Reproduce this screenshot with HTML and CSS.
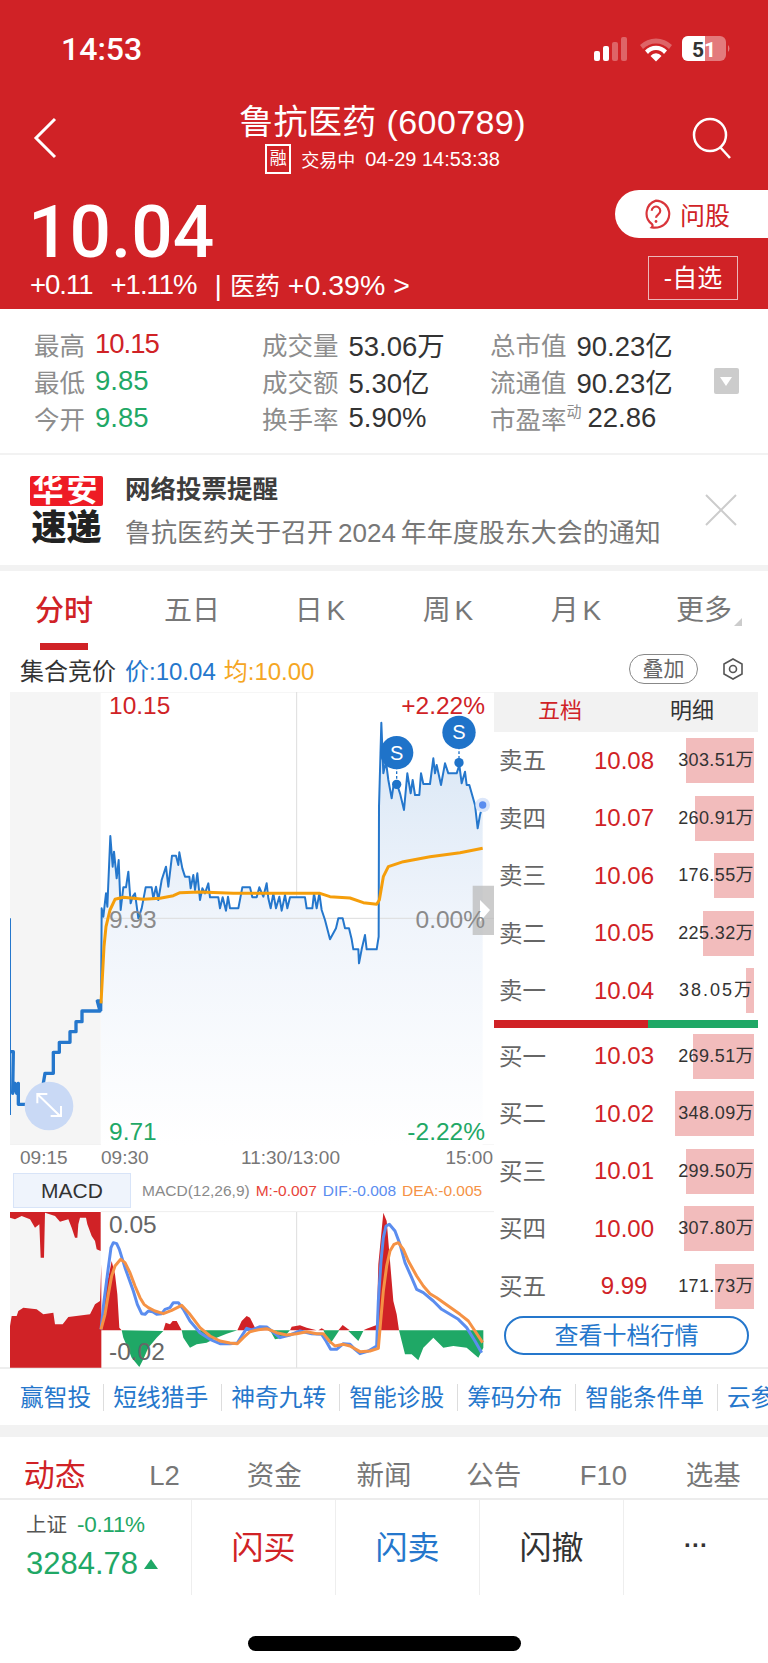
FILE: index.html
```html
<!DOCTYPE html>
<html>
  <head>
    <meta charset="utf-8">
    <title>鲁抗医药 (600789)</title>
    <link rel="stylesheet" href="styles.css">
  </head>
  <body>
    <div class="page">

      <!-- red quote header -->
      <header class="head">
        <div class="status">
          <span class="clock">14:53</span>
          <svg class="status-icons" width="140" height="28" viewBox="0 0 140 28">
            <rect x="1" y="16" width="6" height="10" rx="2" fill="#fff"/>
            <rect x="10" y="11" width="6" height="15" rx="2" fill="#fff"/>
            <rect x="19" y="7" width="6" height="19" rx="2" fill="#fff" opacity=".3"/>
            <rect x="28" y="2" width="6" height="24" rx="2" fill="#fff" opacity=".3"/>
            <path d="M47 10a23 23 0 0 1 32 0l-3 4a18 18 0 0 0-26 0z" fill="#fff" opacity=".3"/>
            <path d="M52 15.500a15 15 0 0 1 22 0l-3 3.500a10 10 0 0 0-16 0z" fill="#fff"/>
            <path d="M57.500 21a7 7 0 0 1 11 0l-5.500 5.500z" fill="#fff"/>
            <rect x="89" y="1" width="44" height="25" rx="6" fill="#fff" opacity=".4"/>
            <path d="M95 1h17v25h-17a6 6 0 0 1-6-6v-13a6 6 0 0 1 6-6z" fill="#fff"/>
            <path d="M135 10a5 5 0 0 1 0 7z" fill="#fff" opacity=".4"/>
            <text x="111" y="22" class="batt-text" text-anchor="end" fill="#333">5</text>
            <text x="111" y="22" class="batt-text" fill="#fff">1</text>
          </svg>
        </div>

        <div class="nav">
          <svg class="nav-icon" width="24" height="42" viewBox="0 0 24 42">
            <path d="M22 2 3 21l19 19" fill="none" stroke="#fff" stroke-width="3"/>
          </svg>
          <div class="nav-title">
            <div class="stock-name">鲁抗医药 (600789)</div>
            <div class="stock-state"><span class="rong">融</span>交易中<span class="stock-time">04-29 14:53:38</span></div>
          </div>
          <svg class="nav-icon nav-search" width="40" height="42" viewBox="0 0 40 42">
            <circle cx="18" cy="18" r="16" fill="none" stroke="#fff" stroke-width="2.500"/>
            <path d="M28 30 38 41" fill="none" stroke="#fff" stroke-width="2.500"/>
          </svg>
        </div>

        <div class="quote">
          <div class="quote-left">
            <div class="last-price">10.04</div>
            <div class="quote-sub">
              <span class="narrow">+0.11</span><span class="narrow">+1.11%</span><span class="sector">| <span class="sector-name">医药</span> +0.39% &gt;</span>
            </div>
          </div>
          <div class="quote-right">
            <div class="ask-btn">
              <svg width="30" height="30" viewBox="0 0 28 28">
                <path d="M14 1.500a12.500 12.500 0 0 1 4 24.300c-2 .8-5 1.200-8 .7 1-1 1-2 .3-3A12.500 12.500 0 0 1 14 1.500z" fill="none" stroke="#d9353b" stroke-width="2"/>
                <path d="M10 11a4 4 0 1 1 6 3.500c-1.500 1-2 1.500-2 3" fill="none" stroke="#d9353b" stroke-width="2"/>
                <circle cx="14" cy="21" r="1.300" fill="#d9353b"/>
              </svg>
              问股
            </div>
            <div class="watch-btn">-自选</div>
          </div>
        </div>
      </header>

      <!-- day stats -->
      <section class="stats">
        <div class="stat-grid">
          <div class="stat"><span class="stat-label">最高</span><span class="up narrow">10.15</span></div>
          <div class="stat"><span class="stat-label">成交量</span><span>53.06万</span></div>
          <div class="stat"><span class="stat-label">总市值</span><span>90.23亿</span></div>
          <div class="stat"><span class="stat-label">最低</span><span class="down">9.85</span></div>
          <div class="stat"><span class="stat-label">成交额</span><span>5.30亿</span></div>
          <div class="stat"><span class="stat-label">流通值</span><span>90.23亿</span></div>
          <div class="stat"><span class="stat-label">今开</span><span class="down">9.85</span></div>
          <div class="stat"><span class="stat-label">换手率</span><span>5.90%</span></div>
          <div class="stat stat-pe"><span class="stat-label">市盈率<sup>动</sup></span><span>22.86</span></div>
        </div>
        <div class="stat-more"></div>
      </section>

      <!-- notice -->
      <section class="notice">
        <div class="notice-logo">
          <div class="logo-red">华安</div>
          <div class="logo-black">速递</div>
        </div>
        <div class="notice-text">
          <div class="notice-title">网络投票提醒</div>
          <div class="notice-body">鲁抗医药关于召开<span class="year">2024</span>年年度股东大会的通知</div>
        </div>
        <svg class="notice-close" width="32" height="32" viewBox="0 0 32 32">
          <path d="M1 1 31 31M31 1 1 31" stroke="#ccc" stroke-width="2"/>
        </svg>
      </section>

      <!-- period tabs -->
      <nav class="periods">
        <div class="period active">分时<i></i></div>
        <div class="period">五日</div>
        <div class="period">日 K</div>
        <div class="period">周 K</div>
        <div class="period">月 K</div>
        <div class="period more">更多</div>
      </nav>

      <div class="legend">
        <span class="legend-name">集合竞价</span>
        <span class="legend-price">价:10.04</span>
        <span class="legend-avg">均:10.00</span>
        <span class="overlay-btn">叠加</span>
        <svg class="gear" width="22" height="24" viewBox="0 0 22 24">
          <path d="M11 2 20 7v10l-9 5-9-5V7z" fill="none" stroke="#555" stroke-width="1.600"/>
          <circle cx="11" cy="12" r="3.500" fill="none" stroke="#555" stroke-width="1.600"/>
        </svg>
      </div>

      <section class="market">
        <div class="charts">
          <!-- price chart, coordinates are 3 units per pixel -->
          <div class="price-chart">
            <svg class="plot" width="484" height="453" viewBox="30 6 1452 1359">
              <defs>
                <linearGradient id="area" gradientUnits="userSpaceOnUse" x1="0" y1="100" x2="0" y2="1365">
                  <stop offset="0" stop-color="#d8e6f5"/>
                  <stop offset=".45" stop-color="#eff4fb"/>
                  <stop offset="1" stop-color="#fff"/>
                </linearGradient>
              </defs>
              <rect x="30" y="6" width="272" height="1359" fill="#f5f5f5"/>
              <path d="M302 6H1482M30 1365H1482" stroke="#eee" stroke-width="3"/>
              <path d="M890 6V1365" stroke="#ddd" stroke-width="3"/>
              <polygon fill="url(#area)" points="303,1365 303,960 305,655 310,680 318,610 322,650 331,438 338,530 342,485 350,565 356,510 362,660 370,592 378,592 385,545 392,640 398,620 405,610 415,685 425,655 437,592 455,592 460,625 468,590 475,630 485,570 498,530 505,590 516,497 528,497 535,525 538,487 547,535 555,560 568,560 572,595 580,555 585,600 592,550 600,630 607,595 615,610 625,580 630,622 655,622 660,655 668,622 678,662 684,620 690,655 715,655 727,592 750,592 757,622 770,622 778,592 790,620 800,580 805,625 812,655 820,610 828,655 838,620 845,662 855,615 862,655 870,622 915,622 920,655 937,655 942,610 950,655 958,610 965,660 975,690 990,748 1008,715 1015,685 1028,685 1035,715 1047,715 1055,748 1060,778 1075,778 1077,820 1085,778 1095,735 1100,778 1130,778 1136,740 1137,350 1144,98 1150,250 1158,215 1165,270 1175,325 1180,290 1190,280 1200,310 1212,360 1222,250 1232,310 1238,270 1245,315 1258,315 1263,250 1270,282 1290,282 1300,205 1305,250 1310,225 1323,285 1335,220 1345,250 1370,250 1378,225 1385,280 1395,245 1400,285 1408,285 1425,345 1433,415 1440,375 1448,345 1448,1365"/>
              <path d="M302 685H1482" stroke="#ddd" stroke-width="3"/>
              <path d="M31 685V1275" stroke="#2577cc" stroke-width="4" fill="none"/>
              <polyline class="line-pre" points="32,1085 40,1085 38,1210 45,1180 50,1210 55,1180 55,1243 130,1243 130,1180 135,1150 160,1150 160,1087 178,1087 178,1057 210,1057 210,1025 228,1025 228,995 246,995 246,963 300,963 292,933 302,933 302,963"/>
              <polyline class="line-price" points="303,960 305,655 310,680 318,610 322,650 331,438 338,530 342,485 350,565 356,510 362,660 370,592 378,592 385,545 392,640 398,620 405,610 415,685 425,655 437,592 455,592 460,625 468,590 475,630 485,570 498,530 505,590 516,497 528,497 535,525 538,487 547,535 555,560 568,560 572,595 580,555 585,600 592,550 600,630 607,595 615,610 625,580 630,622 655,622 660,655 668,622 678,662 684,620 690,655 715,655 727,592 750,592 757,622 770,622 778,592 790,620 800,580 805,625 812,655 820,610 828,655 838,620 845,662 855,615 862,655 870,622 915,622 920,655 937,655 942,610 950,655 958,610 965,660 975,690 990,748 1008,715 1015,685 1028,685 1035,715 1047,715 1055,748 1060,778 1075,778 1077,820 1085,778 1095,735 1100,778 1130,778 1136,740 1137,350 1144,98 1150,250 1158,215 1165,270 1175,325 1180,290 1190,280 1200,310 1212,360 1222,250 1232,310 1238,270 1245,315 1258,315 1263,250 1270,282 1290,282 1300,205 1305,250 1310,225 1323,285 1335,220 1345,250 1370,250 1378,225 1385,280 1395,245 1400,285 1408,285 1425,345 1433,415 1440,375 1448,345"/>
              <polyline class="line-avg" points="303,940 312,770 318,710 330,660 345,628 370,622 430,628 480,625 520,617 540,608 600,606 700,610 960,610 990,620 1050,624 1090,638 1130,643 1138,630 1150,560 1165,530 1210,515 1290,500 1380,488 1448,475"/>
              <path d="M1190 230V283M1377 170V218" stroke="#1f73c9" stroke-width="4" stroke-dasharray="8 6"/>
              <circle cx="1190" cy="283" r="14" fill="#1f73c9"/>
              <circle cx="1377" cy="218" r="14" fill="#1f73c9"/>
              <circle cx="1190" cy="188" r="50" fill="#1f73c9"/>
              <circle cx="1377" cy="127" r="50" fill="#1f73c9"/>
              <text x="1190" y="209" class="sell-mark">S</text>
              <text x="1377" y="148" class="sell-mark">S</text>
              <circle cx="1448" cy="345" r="22" fill="#dbe6fa"/>
              <circle cx="1448" cy="345" r="11" fill="#5b8def"/>
              <circle cx="147" cy="1248" r="73" fill="#c9d9f5"/>
              <path d="M112 1212 180 1278M112 1240V1212H142M183 1248V1278H152" fill="none" stroke="#fff" stroke-width="6"/>
              <path d="M1418 587H1482V735H1418z" fill="#bbb" opacity=".75"/>
              <path d="M1440 630 1470 660 1440 695z" fill="#fff"/>
            </svg>
            <span class="scale scale-tl up">10.15</span>
            <span class="scale scale-tr up">+2.22%</span>
            <span class="scale scale-ml gray">9.93</span>
            <span class="scale scale-mr gray">0.00%</span>
            <span class="scale scale-bl down">9.71</span>
            <span class="scale scale-br down">-2.22%</span>
          </div>

          <div class="axis">
            <span class="axis-pre">09:15</span>
            <span class="axis-open">09:30</span>
            <span class="axis-mid">11:30/13:00</span>
            <span class="axis-end">15:00</span>
          </div>

          <div class="macd-bar">
            <span class="macd-tab">MACD</span>
            <span class="macd-vals">
              <span class="gray">MACD(12,26,9)</span>
              <span class="c-m">M:-0.007</span>
              <span class="c-dif">DIF:-0.008</span>
              <span class="c-dea">DEA:-0.005</span>
            </span>
          </div>

          <div class="macd-chart">
            <svg class="plot" width="484" height="157" viewBox="30 150 1452 471">
              <rect x="30" y="153" width="272" height="467" fill="#f5f5f5"/>
              <path d="M302 152H1482" stroke="#eee" stroke-width="3"/>
              <path d="M890 153V620" stroke="#ddd" stroke-width="3"/>
              <g fill="#d02226">
                <polygon points="30,153 302,153 302,270 290,265 285,240 275,225 262,190 258,170 240,170 235,190 232,230 225,230 215,200 205,175 180,182 165,165 135,155 132,290 122,290 118,190 105,200 90,175 65,165 45,175 30,170"/>
                <polygon points="30,620 304,620 304,310 300,420 285,430 270,460 205,468 188,490 165,490 160,455 130,460 110,445 70,440 55,450 50,465 35,465 30,495"/>
                <polygon points="303,508 312,420 318,350 325,350 335,300 345,340 352,400 358,500 365,508"/>
                <polygon points="490,508 497,485 510,490 518,480 530,480 545,508"/>
                <polygon points="712,508 725,480 740,465 750,470 765,500 790,495 810,508"/>
                <polygon points="870,508 875,497 900,493 920,500 950,508"/>
                <polygon points="955,508 965,502 975,508"/>
                <polygon points="1015,508 1028,492 1045,505 1050,508"/>
                <polygon points="1090,508 1100,503 1130,492 1135,310 1150,155 1160,180 1170,300 1180,420 1190,460 1197,508"/>
              </g>
              <g fill="#1fa866">
                <polygon points="365,508 370,530 385,565 395,590 418,618 430,595 445,560 470,530 490,510"/>
                <polygon points="545,508 550,530 570,560 590,550 620,545 650,530 680,518 712,508"/>
                <polygon points="810,508 825,535 850,530 870,508"/>
                <polygon points="970,508 990,550 1010,520 1018,508"/>
                <polygon points="1045,510 1075,540 1090,510"/>
                <polygon points="1197,508 1205,540 1215,580 1235,580 1255,598 1270,560 1300,530 1330,560 1360,555 1400,560 1435,590 1450,560 1450,508"/>
              </g>
              <polyline class="line-dif" points="303,505 312,420 325,320 333,260 340,245 350,248 358,265 375,320 400,390 412,430 425,458 435,460 445,450 458,452 470,460 485,458 495,445 510,440 520,425 535,425 550,445 570,480 600,515 630,535 660,548 690,548 712,546 725,525 740,502 755,507 780,497 800,498 815,510 840,530 870,522 900,510 935,518 965,520 978,540 992,565 1010,565 1030,548 1050,550 1065,565 1080,578 1105,570 1130,555 1135,420 1143,300 1150,230 1158,195 1168,190 1185,210 1200,250 1215,305 1235,350 1250,385 1270,395 1300,420 1325,445 1350,460 1375,475 1400,500 1425,540 1445,575"/>
              <polyline class="line-dea" points="303,505 315,460 325,400 335,345 345,315 362,295 375,305 390,335 405,375 420,410 432,430 445,440 465,450 490,458 515,448 545,433 570,460 600,500 630,525 660,540 690,546 712,548 730,530 750,512 775,506 800,503 830,515 860,522 890,518 920,512 950,518 970,518 988,540 1005,555 1030,550 1050,555 1080,572 1110,570 1135,562 1142,480 1150,390 1160,315 1170,270 1182,250 1195,245 1210,265 1225,300 1250,345 1270,375 1290,398 1310,410 1345,435 1380,460 1405,480 1425,510 1448,545"/>
            </svg>
            <span class="scale macd-top gray-dark">0.05</span>
            <span class="scale macd-low gray-dark">-0.02</span>
          </div>
        </div>

        <!-- order book -->
        <div class="book">
          <div class="book-head"><span class="up">五档</span><span>明细</span></div>
          <div class="book-row"><span class="book-label">卖五</span><span class="book-price">10.08</span><span class="book-vol"><i style="width:68px"></i><b>303.51万</b></span></div>
          <div class="book-row"><span class="book-label">卖四</span><span class="book-price">10.07</span><span class="book-vol"><i style="width:59px"></i><b>260.91万</b></span></div>
          <div class="book-row"><span class="book-label">卖三</span><span class="book-price">10.06</span><span class="book-vol"><i style="width:40px"></i><b>176.55万</b></span></div>
          <div class="book-row"><span class="book-label">卖二</span><span class="book-price">10.05</span><span class="book-vol"><i style="width:51px"></i><b>225.32万</b></span></div>
          <div class="book-row"><span class="book-label">卖一</span><span class="book-price">10.04</span><span class="book-vol"><i style="width:8px"></i><b class="wide">38.05万</b></span></div>
          <div class="book-split"></div>
          <div class="book-row"><span class="book-label">买一</span><span class="book-price">10.03</span><span class="book-vol"><i style="width:61px"></i><b>269.51万</b></span></div>
          <div class="book-row"><span class="book-label">买二</span><span class="book-price">10.02</span><span class="book-vol"><i style="width:79px"></i><b>348.09万</b></span></div>
          <div class="book-row"><span class="book-label">买三</span><span class="book-price">10.01</span><span class="book-vol"><i style="width:68px"></i><b>299.50万</b></span></div>
          <div class="book-row"><span class="book-label">买四</span><span class="book-price">10.00</span><span class="book-vol"><i style="width:70px"></i><b>307.80万</b></span></div>
          <div class="book-row"><span class="book-label">买五</span><span class="book-price">9.99</span><span class="book-vol"><i style="width:39px"></i><b>171.73万</b></span></div>
          <div class="book-btn">查看十档行情</div>
        </div>
      </section>

      <!-- tool links -->
      <div class="tools">
        <span>赢智投</span><span>短线猎手</span><span>神奇九转</span><span>智能诊股</span><span>筹码分布</span><span>智能条件单</span><span>云参</span>
      </div>

      <nav class="info-tabs">
        <span class="up info-active">动态</span><span>L2</span><span>资金</span><span>新闻</span><span>公告</span><span>F10</span><span>选基</span>
      </nav>

      <!-- bottom trade bar -->
      <footer class="trade">
        <div class="index-cell">
          <div class="index-top">上证<span class="down">-0.11%</span></div>
          <div class="index-val">3284.78<i></i></div>
        </div>
        <div class="trade-cell up">闪买</div>
        <div class="trade-cell blue">闪卖</div>
        <div class="trade-cell">闪撤</div>
        <div class="trade-cell dots">···</div>
      </footer>
      <div class="home-bar"></div>

    </div>
  </body>
</html>
```

FILE: styles.css
```css
* {
  box-sizing: border-box;
}

body {
  margin: 0;
  background: #fff;
  font-family: "Liberation Sans", "Noto Sans CJK SC", sans-serif;
  color: #333;
}

i {
  font-style: normal;
}

.page {
  width: 768px;
  height: 1663px;
  overflow: hidden;
}

.up { color: #d02226; }
.down { color: #1fa866; }
.blue { color: #2577cc; }
.gray { color: #8a8a8a; }
.gray-dark { color: #666; }
.narrow { letter-spacing: -1px; }

/* header */
.head {
  height: 309px;
  background: #d02226;
  color: #fff;
}

.status {
  height: 96px;
  display: flex;
  align-items: center;
  justify-content: space-between;
  padding: 2px 35px 0 61px;
}

.clock {
  font-family: Roboto, sans-serif;
  font-size: 32px;
  font-weight: 500;
}

.batt-text {
  font-family: Roboto, sans-serif;
  font-size: 21px;
  font-weight: 700;
}

.nav {
  height: 77px;
  display: grid;
  grid-template-columns: 1fr auto 1fr;
  padding: 4px 36px 0 33px;
}

.nav-icon {
  margin-top: 17px;
}

.nav-search {
  justify-self: end;
}

.nav-title {
  text-align: center;
}

.stock-name {
  font-size: 34px;
  line-height: 44px;
  letter-spacing: .4px;
  white-space: nowrap;
}

.stock-state {
  display: flex;
  align-items: center;
  justify-content: center;
  font-size: 18px;
  height: 30px;
}

.rong {
  width: 26px;
  height: 30px;
  border: 2px solid #fff;
  font-size: 17px;
  line-height: 26px;
  margin-right: 10px;
}

.stock-time {
  margin-left: 10px;
  font-size: 20px;
}

.quote {
  height: 136px;
  display: flex;
  justify-content: space-between;
}

.quote-left {
  padding: 23px 0 0 28px;
}

.last-price {
  font-family: Roboto, sans-serif;
  font-size: 73px;
  font-weight: 500;
  line-height: 72px;
}

.quote-sub {
  margin-top: 2px;
  padding-left: 2px;
  font-size: 27.500px;
  line-height: 30px;
  display: flex;
  gap: 18px;
  white-space: nowrap;
}

.sector {
  font-size: 28.500px;
}

.sector-name {
  font-size: 25px;
}

.quote-right {
  display: flex;
  flex-direction: column;
  align-items: flex-end;
  padding-top: 17px;
}

.ask-btn {
  width: 153px;
  height: 48px;
  background: #fff;
  border-radius: 24px 0 0 24px;
  color: #d02226;
  font-size: 25px;
  display: flex;
  align-items: center;
  gap: 9px;
  padding-left: 26px;
}

.watch-btn {
  width: 90px;
  height: 44px;
  margin: 18px 30px 0 0;
  border: 1px solid #ecb7b9;
  font-size: 25px;
  line-height: 42px;
  text-align: center;
}

/* stats */
.stats {
  height: 146px;
  display: flex;
  align-items: flex-start;
  padding: 16px 0 0 34px;
  border-bottom: 2px solid #f2f2f2;
  font-size: 27.500px;
}

.stat-grid {
  width: 680px;
  display: grid;
  grid-template-columns: 228px 228px 1fr;
  grid-auto-rows: 37px;
}

.stat {
  display: flex;
  align-items: center;
  gap: 10px;
  white-space: nowrap;
}

.stat-label {
  color: #8d8d8d;
  font-size: 25.500px;
}

.stat-pe {
  gap: 6px;
}

.stat-label sup {
  font-size: 15px;
  line-height: 0;
  vertical-align: 12px;
}

.stat-more {
  position: relative;
  width: 25px;
  height: 26px;
  margin-top: 43px;
  background: #ccc;
  border-radius: 2px;
}

.stat-more::after {
  content: "";
  position: absolute;
  left: 6px;
  top: 9px;
  border: 6px solid transparent;
  border-top: 9px solid #fff;
  border-bottom: 0;
}

/* notice */
.notice {
  height: 110px;
  display: flex;
  padding: 21px 31px 0 30px;
}

.notice-logo {
  width: 73px;
  margin-right: 22px;
  text-align: center;
}

.logo-red {
  height: 30px;
  background: #ee1c25;
  border-radius: 2px;
  color: #fff;
  font-size: 31px;
  font-weight: 700;
  line-height: 30px;
  letter-spacing: 3px;
  white-space: nowrap;
}

.logo-black {
  margin-top: 7px;
  color: #222;
  font-size: 35px;
  font-weight: 900;
  line-height: 30px;
  white-space: nowrap;
}

.notice-text {
  margin-top: -3px;
}

.notice-title {
  font-size: 25.500px;
  font-weight: 700;
  line-height: 32px;
  color: #333;
  opacity: .95;
}

.notice-body {
  margin-top: 12px;
  font-size: 26px;
  line-height: 32px;
  color: #777;
  white-space: nowrap;
}

.year {
  margin: 0 5px;
}

.notice-close {
  margin: 18px 0 0 auto;
}

/* period tabs */
.periods {
  height: 85px;
  padding-top: 20px;
  border-top: 6px solid #f2f2f2;
  display: grid;
  grid-template-columns: repeat(6, 128px);
  font-size: 28px;
  color: #777;
  text-align: center;
  word-spacing: -4px;
}

.period {
  position: relative;
  line-height: 40px;
}

.period.active {
  color: #d02226;
  font-weight: 500;
  font-size: 29px;
}

.period.active i {
  display: block;
  width: 48px;
  height: 7px;
  margin: 12px auto 0;
  background: #d02226;
}

.period.more::after {
  content: "";
  position: absolute;
  right: 26px;
  top: 27px;
  border-left: 8px solid transparent;
  border-bottom: 8px solid #ccc;
}

.legend {
  height: 42px;
  display: flex;
  align-items: center;
  padding: 0 24px 4px 20px;
  font-size: 24px;
}

.legend-price {
  margin-left: 9px;
  color: #2577cc;
}

.legend-avg {
  margin-left: 8px;
  color: #f5a623;
}

.overlay-btn {
  width: 69px;
  height: 30px;
  margin-left: auto;
  border: 1.500px solid #888;
  border-radius: 15px;
  color: #666;
  font-size: 21px;
  line-height: 27px;
  text-align: center;
}

.gear {
  margin-left: 24px;
}

/* chart + order book */
.market {
  display: grid;
  grid-template-columns: 484px 264px;
  height: 675px;
  margin-left: 10px;
}

.price-chart,
.macd-chart {
  position: relative;
}

.plot {
  display: block;
}

.price-chart {
  height: 453px;
}

.line-pre,
.line-price,
.line-avg,
.line-dif,
.line-dea {
  fill: none;
  stroke-linejoin: round;
}

.line-pre {
  stroke: #2577cc;
  stroke-width: 10;
}

.line-price {
  stroke: #2577cc;
  stroke-width: 6;
}

.line-avg {
  stroke: #f59e0b;
  stroke-width: 9;
}

.line-dif {
  stroke: #5b8def;
  stroke-width: 9;
}

.line-dea {
  stroke: #f59245;
  stroke-width: 9;
}

.sell-mark {
  font-family: "Liberation Sans", sans-serif;
  font-size: 60px;
  fill: #fff;
  text-anchor: middle;
}

.scale {
  position: absolute;
  font-size: 24.500px;
  line-height: 28px;
}

.scale-tl { left: 99px; top: 0; }
.scale-tr { right: 9px; top: 0; }
.scale-ml { left: 99px; top: 214px; }
.scale-mr { right: 9px; top: 214px; }
.scale-bl { left: 99px; top: 426px; }
.scale-br { right: 9px; top: 426px; }

.axis {
  position: relative;
  height: 28px;
  font-size: 19px;
  line-height: 22px;
  color: #777;
}

.axis span {
  position: absolute;
  top: 2px;
}

.axis-pre { left: 10px; }
.axis-open { left: 91px; }
.axis-mid { left: 231px; }
.axis-end { right: 1px; }

.macd-bar {
  height: 38px;
  display: flex;
  align-items: flex-start;
  padding-left: 3px;
}

.macd-tab {
  width: 118px;
  height: 35px;
  background: #eff4fc;
  border: 1px solid #d8e4f8;
  font-size: 21px;
  line-height: 33px;
  text-align: center;
}

.macd-vals {
  display: flex;
  gap: 6px;
  margin-left: 11px;
  font-size: 15.500px;
  line-height: 35px;
  white-space: nowrap;
}

.c-m { color: #e8443a; }
.c-dif { color: #5b8def; }
.c-dea { color: #f59245; }

.macd-chart {
  height: 156px;
}

.macd-top { left: 99px; top: 0; }
.macd-low { left: 99px; top: 127px; }

/* order book */
.book {
  position: relative;
}

.book-head {
  height: 40px;
  background: #f2f2f2;
  display: grid;
  grid-template-columns: 132px 132px;
  font-size: 22px;
  line-height: 38px;
  text-align: center;
}

.book-row {
  height: 57.500px;
  display: grid;
  grid-template-columns: 80px 90px 1fr;
  align-items: center;
  padding: 0 4px 0 5px;
}

.book-label {
  padding-bottom: 3px;
  font-size: 23.500px;
  color: #666;
}

.book-price {
  font-size: 24px;
  color: #d02226;
  text-align: center;
}

.book-vol {
  position: relative;
  height: 45px;
  line-height: 45px;
  text-align: right;
  white-space: nowrap;
}

.book-vol i {
  position: absolute;
  right: 0;
  top: 0;
  bottom: 0;
  background: #f2bcbc;
}

.book-vol b {
  position: relative;
  font-weight: 400;
  font-size: 18px;
  letter-spacing: .4px;
}

.book-vol b.wide {
  letter-spacing: 2px;
}

.book-split {
  height: 8px;
  background: linear-gradient(to right, #d02226 154px, #1fa866 154px);
}

.book-btn {
  height: 39px;
  margin: 1px 9px 0 10px;
  border: 2px solid #2577cc;
  border-radius: 20px;
  color: #2577cc;
  font-size: 24px;
  line-height: 35px;
  text-align: center;
}

/* tool links */
.tools {
  height: 58px;
  border-top: 2px solid #eee;
  display: flex;
  align-items: center;
  padding-left: 20px;
  color: #2577cc;
  font-size: 23.750px;
  white-space: nowrap;
  overflow: hidden;
}

.tools span {
  padding: 0 13px 0 9px;
  line-height: 27px;
  border-left: 1px solid #ddd;
  flex: none;
}

.tools span:first-child {
  padding: 0 12px 0 0;
  border-left: 0;
}

.info-tabs {
  height: 75px;
  border-top: 12px solid #f2f2f2;
  border-bottom: 2px solid #ececec;
  padding-top: 19px;
  display: grid;
  grid-template-columns: repeat(7, 1fr);
  font-size: 27.500px;
  line-height: 40px;
  color: #777;
  text-align: center;
}

.info-active {
  font-size: 31px;
}

/* trade bar */
.trade {
  height: 95px;
  display: grid;
  grid-template-columns: 192px 144px 144px 144px 1fr;
}

.index-cell {
  padding: 10px 0 0 26px;
  border-right: 1px solid #eee;
}

.index-top {
  font-size: 20.500px;
  line-height: 30px;
  color: #555;
}

.index-top span {
  margin-left: 10px;
  font-size: 22.500px;
  letter-spacing: -.3px;
}

.index-val {
  display: flex;
  align-items: center;
  margin-top: 9px;
  color: #1fa866;
  font-size: 31px;
  line-height: 30px;
  white-space: nowrap;
}

.index-val i {
  margin-left: 6px;
  border: 7px solid transparent;
  border-bottom: 10px solid #1fa866;
  border-top: 0;
}

.trade-cell {
  display: flex;
  align-items: center;
  justify-content: center;
  padding-bottom: 6px;
  border-right: 1px solid #eee;
  font-size: 32px;
}

.trade-cell.dots {
  border-right: 0;
  font-size: 24px;
  font-weight: 700;
}

.home-bar {
  width: 273px;
  height: 15px;
  margin: 41px 0 0 248px;
  background: #000;
  border-radius: 8px;
}
```
